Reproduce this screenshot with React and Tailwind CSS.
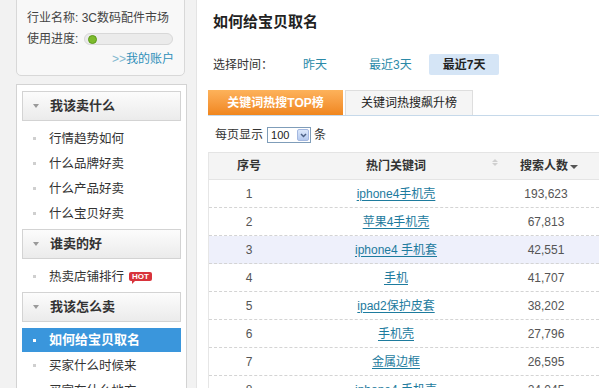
export default function App() {
  const rows = [
    ["1", "iphone4手机壳", "193,623"],
    ["2", "苹果4手机壳", "67,813"],
    ["3", "iphone4 手机套", "42,551"],
    ["4", "手机", "41,707"],
    ["5", "ipad2保护皮套", "38,202"],
    ["6", "手机壳", "27,796"],
    ["7", "金属边框", "26,595"],
    ["8", "iphone4 手机壳", "24,045"],
  ];
  const Header = ({ children }) => (
    <div className="h-[30px] border border-[#d3d3d3] bg-gradient-to-b from-[#fcfcfc] to-[#ebebeb] flex items-center pl-[10px]">
      <span className="w-0 h-0 border-l-[3px] border-r-[3px] border-t-[4px] border-l-transparent border-r-transparent border-t-[#9a9a9a]" />
      <span className="ml-[11px] text-[13px] font-bold text-[#333] leading-[16px]">{children}</span>
    </div>
  );
  const Item = ({ children, active, extra }) => (
    <div
      className={
        active
          ? "h-[24px] mb-[1px] flex items-center pl-[11px] bg-[#3a96dc] text-white font-bold text-[13px]"
          : "h-[25px] flex items-center pl-[11px] text-[#333] text-[12.5px]"
      }
    >
      <span className={active ? "w-[3px] h-[3px] bg-white" : "w-[3px] h-[3px] bg-[#cfcfcf]"} />
      <span className="ml-[13px] leading-[16px] whitespace-nowrap">{children}</span>
      {extra}
    </div>
  );
  return (
    <div className="w-[599px] h-[388px] overflow-hidden flex bg-white text-[12px] text-[#333] font-['Liberation_Sans','Noto_Sans_CJK_SC',sans-serif]">
      {/* Left */}
      <div className="w-[197px] shrink-0 bg-[#f2f2f2] border-r border-[#e4e4e4] pl-[16px]">
        <div className="w-[169px] h-[77px] -mt-px bg-[#f8f8f8] border border-[#d8d8d8] rounded-b-[5px] px-[10px] pt-[8px]">
          <div className="h-[20px] leading-[20px] text-[#444] whitespace-nowrap">行业名称: 3C数码配件市场</div>
          <div className="h-[20px] mt-[1px] flex items-center text-[#444]">
            <span className="leading-[20px] whitespace-nowrap shrink-0">使用进度:</span>
            <div className="ml-[6px] w-[89px] shrink-0 h-[12px] rounded-full bg-[#ebebeb] border border-[#d8d8d8] flex items-center pl-[3px]">
              <div className="w-[9px] h-[9px] rounded-full bg-[#7dbb2c] border border-[#5c9a1a]" />
            </div>
          </div>
          <div className="h-[20px] leading-[20px] text-right text-[#2e8fb8] whitespace-nowrap">
            <span className="text-[#7fb6cf]">&gt;&gt;</span>我的账户
          </div>
        </div>
        <div className="mt-[8px] w-[171px] h-[400px] bg-white border border-[#d3d3d3] px-[5px] pt-[6px]">
          <Header>我该卖什么</Header>
          <div className="pt-[5px] pb-[3px]">
            <Item>行情趋势如何</Item>
            <Item>什么品牌好卖</Item>
            <Item>什么产品好卖</Item>
            <Item>什么宝贝好卖</Item>
          </div>
          <Header>谁卖的好</Header>
          <div className="pt-[5px] pb-[3px]">
            <Item
              extra={
                <span className="relative ml-[5px] h-[9px] px-[3px] rounded-[2px] bg-[#d8333b] text-white text-[8px] leading-[9px] font-bold">
                  HOT
                  <span className="absolute left-[3px] -bottom-[3px] w-0 h-0 border-t-[3px] border-r-[3px] border-t-[#d8333b] border-r-transparent" />
                </span>
              }
            >
              热卖店铺排行
            </Item>
          </div>
          <Header>我该怎么卖</Header>
          <div className="pt-[6px]">
            <Item active>如何给宝贝取名</Item>
            <Item>买家什么时候来</Item>
            <Item>买家在什么地方</Item>
          </div>
        </div>
      </div>

      {/* Right */}
      <div className="flex-1 min-w-0 pl-[11px] pt-[12px]">
        <div className="ml-[5px] h-[20px] leading-[20px] text-[15px] font-bold text-[#222]">如何给宝贝取名</div>
        <div className="mt-[22px] h-[21px] flex items-center ml-[5px]">
          <span className="w-[90px] text-[#333]">选择时间：</span>
          <span className="text-[#2b8aa8]">昨天</span>
          <span className="ml-[42px] text-[#2b8aa8]">最近3天</span>
          <span className="ml-[17px] h-[21px] px-[14px] flex items-center bg-[#d5e5f6] rounded-[2px] font-bold text-[#222]">最近7天</span>
        </div>
        <div className="mt-[15px] flex items-end border-b border-[#c6d9ea]">
          <div className="w-[135px] h-[25px] flex items-center justify-center bg-gradient-to-b from-[#fdb25a] to-[#f0861c] text-white font-bold">
            关键词热搜TOP榜
          </div>
          <div className="ml-[2px] w-[128px] h-[25px] flex items-center justify-center bg-[#f5f5f5] border border-b-0 border-[#dedede] text-[#222]">
            关键词热搜飙升榜
          </div>
        </div>
        <div className="mt-[8px] h-[22px] flex items-center ml-[7px] text-[#333]">
          <span>每页显示</span>
          <div className="ml-[4px] w-[44px] h-[16px] border border-[#7f9db9] bg-white flex items-center">
            <span className="ml-[3px] flex-1 text-[11px] leading-[14px] text-[#222]">100</span>
            <span className="mr-[1px] w-[12px] h-[12px] rounded-[2px] bg-gradient-to-b from-[#dce8fb] to-[#b4c9ee] border border-[#a4b8e0] flex items-center justify-center">
              <svg width="7" height="5" viewBox="0 0 7 5">
                <path d="M1 1 L3.5 3.5 L6 1" stroke="#4d6185" strokeWidth="1.5" fill="none" />
              </svg>
            </span>
          </div>
          <span className="ml-[3px]">条</span>
        </div>
        <div className="mt-[6px] border-l border-[#e6e6e6]">
          <div className="h-[28px] flex items-center bg-[#f4f4f4] border-t border-b border-[#e4e4e4] font-bold text-[#333]">
            <div className="w-[80px] text-center">序号</div>
            <div className="w-[214px] text-center relative">
              热门关键词
              <span className="absolute right-[5px] top-[2px] flex flex-col gap-[1px]">
                <span className="w-0 h-0 border-l-[3px] border-r-[3px] border-b-[3px] border-l-transparent border-r-transparent border-b-[#cfcfcf]" />
                <span className="w-0 h-0 border-l-[3px] border-r-[3px] border-t-[3px] border-l-transparent border-r-transparent border-t-[#cfcfcf]" />
              </span>
            </div>
            <div className="w-[86px] flex items-center justify-center pl-[6px]">
              搜索人数
              <span className="ml-[2px] mt-[2px] w-0 h-0 border-l-[4px] border-r-[4px] border-t-[4px] border-l-transparent border-r-transparent border-t-[#555]" />
            </div>
            <div className="flex-1" />
          </div>
          {rows.map(([n, k, v]) => (
            <div
              key={n}
              className={
                "h-[28px] flex items-center border-b border-dashed border-[#d4d4d4] " +
                (n === "3" ? "bg-[#eef0fb]" : "")
              }
            >
              <div className="w-[80px] text-center text-[#555]">{n}</div>
              <div className="w-[214px] text-center">
                <span className="text-[#1d7b9e] underline underline-offset-2">{k}</span>
              </div>
              <div className="w-[86px] text-center text-[#555]">{v}</div>
              <div className="flex-1" />
            </div>
          ))}
        </div>
      </div>
    </div>
  );
}
